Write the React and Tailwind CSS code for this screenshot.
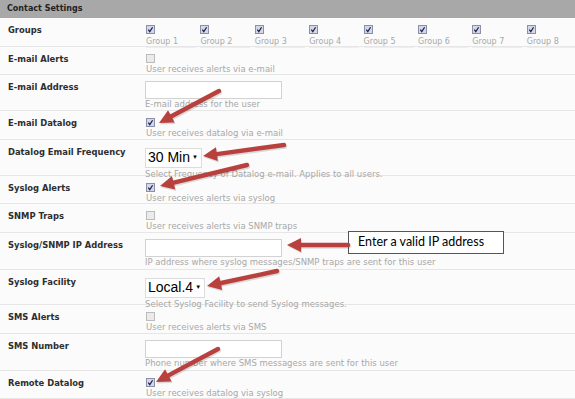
import React from "react";

const rows = [
  { label: "Groups", h: "h-[29px]", type: "groups" },
  { label: "E-mail Alerts", h: "h-[28px]", type: "cb", checked: false, desc: "User receives alerts via e-mail" },
  { label: "E-mail Address", h: "h-[36px]", type: "input", desc: "E-mail address for the user" },
  { label: "E-mail Datalog", h: "h-[29px]", type: "cb", checked: true, desc: "User receives datalog via e-mail" },
  { label: "Datalog Email Frequency", h: "h-[36px]", type: "select", value: "30 Min", desc: "Select Frequency of Datalog e-mail. Applies to all users." },
  { label: "Syslog Alerts", h: "h-[28px]", type: "cb", checked: true, desc: "User receives alerts via syslog" },
  { label: "SNMP Traps", h: "h-[29px]", type: "cb", checked: false, desc: "User receives alerts via SNMP traps" },
  { label: "Syslog/SNMP IP Address", h: "h-[37px]", type: "input", desc: "IP address where syslog messages/SNMP traps are sent for this user" },
  { label: "Syslog Facility", h: "h-[35px]", type: "select", value: "Local.4", desc: "Select Syslog Facility to send Syslog messages." },
  { label: "SMS Alerts", h: "h-[29px]", type: "cb", checked: false, desc: "User receives alerts via SMS" },
  { label: "SMS Number", h: "h-[37px]", type: "input", desc: "Phone number where SMS messagess are sent for this user" },
  { label: "Remote Datalog", h: "h-[28px]", type: "cb", checked: true, desc: "User receives datalog via syslog" },
];

const font = "font-['DejaVu_Sans',sans-serif]";

function Checkbox({ checked }) {
  if (checked) {
    return (
      <div className="w-[9px] h-[9px] border border-[#8a90a8] bg-[#d3d7e6] flex items-center justify-center">
        <svg width="7" height="7" viewBox="0 0 7 7">
          <path d="M1.3 3.6 L2.8 5.6 L5.6 1.2" fill="none" stroke="#1e2250" strokeWidth="1.2" />
        </svg>
      </div>
    );
  }
  return <div className="w-[9px] h-[9px] border border-[#bcbcbc] bg-[#ebebeb]" />;
}

function Desc({ children }) {
  return <div className="text-[8.5px] leading-[11px] text-[#a8a8a8] whitespace-nowrap">{children}</div>;
}

function Arrow({ x1, y1, x2, y2 }) {
  const dx = x2 - x1;
  const dy = y2 - y1;
  const len = Math.sqrt(dx * dx + dy * dy);
  const ux = dx / len;
  const uy = dy / len;
  const hl = 14;
  const hw = 7;
  const bx = x2 - ux * hl;
  const by = y2 - uy * hl;
  const px = -uy;
  const py = ux;
  const pts = `${x2},${y2} ${bx + px * hw},${by + py * hw} ${bx - px * hw},${by - py * hw}`;
  return (
    <g>
      <line x1={x1 + 1} y1={y1 + 1.5} x2={bx + ux * 2 + 1} y2={by + uy * 2 + 1.5} stroke="#00000022" strokeWidth="4.5" strokeLinecap="round" />
      <polygon points={pts} fill="#00000022" transform="translate(1 1.5)" />
      <line x1={x1} y1={y1} x2={bx + ux * 2} y2={by + uy * 2} stroke="#b9413d" strokeWidth="4.5" strokeLinecap="round" />
      <polygon points={pts} fill="#b9413d" />
    </g>
  );
}

export default function App() {
  return (
    <div className={`relative w-[575px] h-[399px] overflow-hidden bg-[#fbfbfb] ${font}`}>
      <div className="h-[18px] bg-[#a8a8a8] flex items-center pl-[7px] text-[8px] font-bold text-[#222]">
        Contact Settings
      </div>
      {rows.map((r) => (
        <div key={r.label} className={`flex border-b border-[#e6e6e6] ${r.h}`}>
          <div className="w-[145px] flex-none pl-[8px] pt-[7px] text-[8.4px] leading-[11px] font-bold text-[#2e2e2e]">
            {r.label}
          </div>
          <div className="flex-1">
            {r.type === "groups" && (
              <div className="flex pt-[7px]">
                {[1, 2, 3, 4, 5, 6, 7, 8].map((g) => (
                  <div key={g} className="w-[54.4px] flex-none pl-[1px]">
                    <Checkbox checked />
                    <div className="mt-[2px] text-[8px] leading-[11px] text-[#a8a8a8] border-b border-[#eeeeee] w-[50px]">Group {g}</div>
                  </div>
                ))}
              </div>
            )}
            {r.type === "cb" && (
              <div className="pt-[7px] pl-[1px]">
                <Checkbox checked={r.checked} />
                <div className="mt-[1px]">
                  <Desc>{r.desc}</Desc>
                </div>
              </div>
            )}
            {r.type === "input" && (
              <div className="pt-[6px]">
                <div className="w-[137px] h-[18px] bg-white border border-[#d2d2d2]" />
                <Desc>{r.desc}</Desc>
              </div>
            )}
            {r.type === "select" && (
              <div className="pt-[5px]">
                <div className="inline-flex items-center h-[20px] bg-white border border-[#dcdcdc] pl-[2px] pr-[3px] font-['Liberation_Sans',sans-serif] text-[14px] text-black">
                  {r.value}
                  <span className="ml-[2px] text-[6px]">▼</span>
                </div>
                <Desc>{r.desc}</Desc>
              </div>
            )}
          </div>
        </div>
      ))}

      <div className="absolute left-[348px] top-[231px] w-[156px] h-[23px] bg-white border border-[#555] flex items-center pl-[9px] font-['Lato',sans-serif] text-[12.5px] text-black">
        Enter a valid IP address
      </div>

      <svg className="absolute left-0 top-0 pointer-events-none" width="575" height="399">
        <Arrow x1={219} y1={91} x2={159} y2={123} />
        <Arrow x1={284} y1={145} x2={203} y2={156} />
        <Arrow x1={247} y1={165} x2={160} y2={186} />
        <Arrow x1={348} y1={245} x2={287} y2={245} />
        <Arrow x1={277} y1={271} x2={207} y2={286} />
        <Arrow x1={218} y1={349} x2={156} y2={382} />
      </svg>
    </div>
  );
}
